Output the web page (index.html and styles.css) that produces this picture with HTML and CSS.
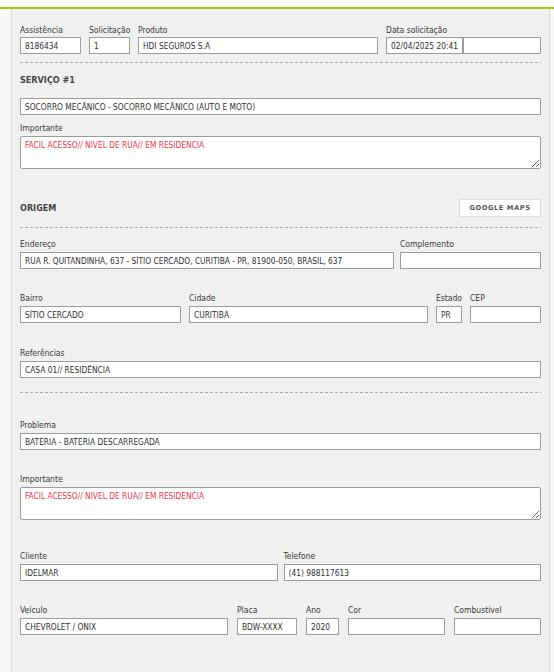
FILE: index.html
```html
<!DOCTYPE html>
<html lang="pt-BR">
<head>
<meta charset="utf-8">
<title>Atendimento</title>
<link rel="stylesheet" href="styles.css">
</head>
<body>
<div class="topbar"></div>
<div class="wrap">
  <main class="panel">
    <div class="row row-top">
      <div class="field w-assist"><label>Assistência</label><input type="text" value="8186434"></div>
      <div class="field w-solic"><label>Solicitação</label><input type="text" value="1"></div>
      <div class="field grow"><label>Produto</label><input type="text" value="HDI SEGUROS S.A"></div>
      <div class="field w-data"><label>Data solicitação</label>
        <div class="pair"><input type="text" value="02/04/2025 20:41"><input type="text" value=""></div>
      </div>
    </div>

    <div class="sep sep-1"></div>

    <h2 class="section-title t-servico">SERVIÇO #1</h2>
    <input type="text" class="full i-servico" value="SOCORRO MECÂNICO - SOCORRO MECÂNICO (AUTO E MOTO)">

    <div class="field f-imp1"><label>Importante</label><textarea class="alert">FACIL ACESSO// NIVEL DE RUA// EM RESIDENCIA</textarea></div>

    <div class="section-head">
      <h2 class="section-title">ORIGEM</h2>
      <button type="button" class="btn-maps">GOOGLE MAPS</button>
    </div>

    <div class="sep sep-2"></div>

    <div class="row row-end">
      <div class="field grow"><label>Endereço</label><input type="text" value="RUA R. QUITANDINHA, 637 - SÍTIO CERCADO, CURITIBA - PR, 81900-050, BRASIL, 637"></div>
      <div class="field w-compl"><label>Complemento</label><input type="text" value=""></div>
    </div>

    <div class="row row-bairro">
      <div class="field w-bairro"><label>Bairro</label><input type="text" value="SÍTIO CERCADO"></div>
      <div class="field grow"><label>Cidade</label><input type="text" value="CURITIBA"></div>
      <div class="field w-estado"><label>Estado</label><input type="text" value="PR"></div>
      <div class="field w-cep"><label>CEP</label><input type="text" value=""></div>
    </div>

    <div class="row row-ref">
      <div class="field grow"><label>Referências</label><input type="text" value="CASA 01// RESIDÊNCIA"></div>
    </div>

    <div class="sep sep-3"></div>

    <div class="row row-prob">
      <div class="field grow"><label>Problema</label><input type="text" value="BATERIA - BATERIA DESCARREGADA"></div>
    </div>

    <div class="field f-imp2"><label>Importante</label><textarea class="alert">FACIL ACESSO// NIVEL DE RUA// EM RESIDENCIA</textarea></div>

    <div class="row row-cli">
      <div class="field half"><label>Cliente</label><input type="text" value="IDELMAR"></div>
      <div class="field half"><label>Telefone</label><input type="text" value="(41) 988117613"></div>
    </div>

    <div class="row row-vei">
      <div class="field grow"><label>Veículo</label><input type="text" value="CHEVROLET / ONIX"></div>
      <div class="field w-placa"><label>Placa</label><input type="text" value="BDW-XXXX"></div>
      <div class="field w-ano"><label>Ano</label><input type="text" value="2020"></div>
      <div class="field w-cor"><label>Cor</label><input type="text" value=""></div>
      <div class="field w-comb"><label>Combustível</label><input type="text" value=""></div>
    </div>
  </main>
</div>
</body>
</html>
```

FILE: styles.css
```css
html {
  overflow: hidden;
}

body {
  margin: 0;
  background: #f8f8f8;
  font-family: "DejaVu Sans", Verdana, sans-serif;
  font-stretch: condensed;
  color: #3a3a3a;
}

.topbar {
  height: 7px;
  border-bottom: 2px solid #a7c821;
}

.wrap {
  padding: 0 4px 0 11px;
}

.panel {
  display: block;
  background: #f0f0f0;
  border-left: 1px solid #d9d9d9;
  border-right: 1px solid #d9d9d9;
  padding: 15px 8px 60px;
}

.row {
  display: flex;
  gap: 8px;
}

.field {
  display: flex;
  flex-direction: column;
  min-width: 0;
}

.field label {
  font-size: 8.5px;
  line-height: 12px;
  margin-bottom: 2px;
  color: #3a3a3a;
  white-space: nowrap;
}

input,
textarea {
  font-family: inherit;
  font-stretch: condensed;
  font-size: 8.3px;
  color: #2f2f2f;
  background: #fff;
  border: 1px solid #9c9c9c;
  box-sizing: border-box;
  margin: 0;
  outline: none;
}

input {
  display: block;
  height: 17px;
  padding: 0 4px;
  width: 100%;
}

textarea {
  display: block;
  width: 100%;
  height: 33px;
  padding: 3px 4px;
  border-radius: 2px;
  line-height: 10px;
}

textarea.alert {
  color: #ee3348;
}

.grow { flex: 1; }
.half { flex: 1; }

/* row 1 */
.row-top label { margin-bottom: 1px; }
.w-assist { width: 61px; }
.w-solic { width: 41px; }
.w-data { width: 155px; }
.pair { display: flex; }
.pair input { width: 77px; }
.pair input + input { width: 78px; }

.sep {
  height: 1px;
  background: repeating-linear-gradient(to right, #a9a9a9 0 3px, transparent 3px 5px);
}

.sep-1 { margin-top: 8px; }

.section-title {
  margin: 0;
  font-size: 9px;
  line-height: 12px;
  font-weight: bold;
  color: #444;
}

.t-servico { margin-top: 11px; }
.i-servico { margin-top: 12px; }

.f-imp1 { margin-top: 7px; }

.section-head {
  margin-top: 30px;
  display: flex;
  align-items: center;
  justify-content: space-between;
}

.btn-maps {
  width: 82px;
  height: 18px;
  padding: 0;
  background: #fff;
  border: 1px solid #dedede;
  font-family: inherit;
  font-stretch: normal;
  font-weight: bold;
  font-size: 6.7px;
  letter-spacing: 0.55px;
  color: #555;
}

.sep-2 { margin-top: 10px; }

.row-end { margin-top: 10px; gap: 6px; }
.w-compl { width: 141px; }

.row-bairro { margin-top: 23px; }
.w-bairro { width: 161px; }
.w-estado { width: 26px; }
.w-cep { width: 71px; }

.row-ref { margin-top: 24px; }

.sep-3 { margin-top: 14px; }

.row-prob { margin-top: 26px; }

.f-imp2 { margin-top: 23px; }

.row-cli { margin-top: 30px; gap: 6px; }

.row-vei { margin-top: 23px; gap: 9px; }
.w-placa { width: 60px; }
.w-ano { width: 33px; }
.w-cor { width: 97px; }
.w-comb { width: 87px; }
```
